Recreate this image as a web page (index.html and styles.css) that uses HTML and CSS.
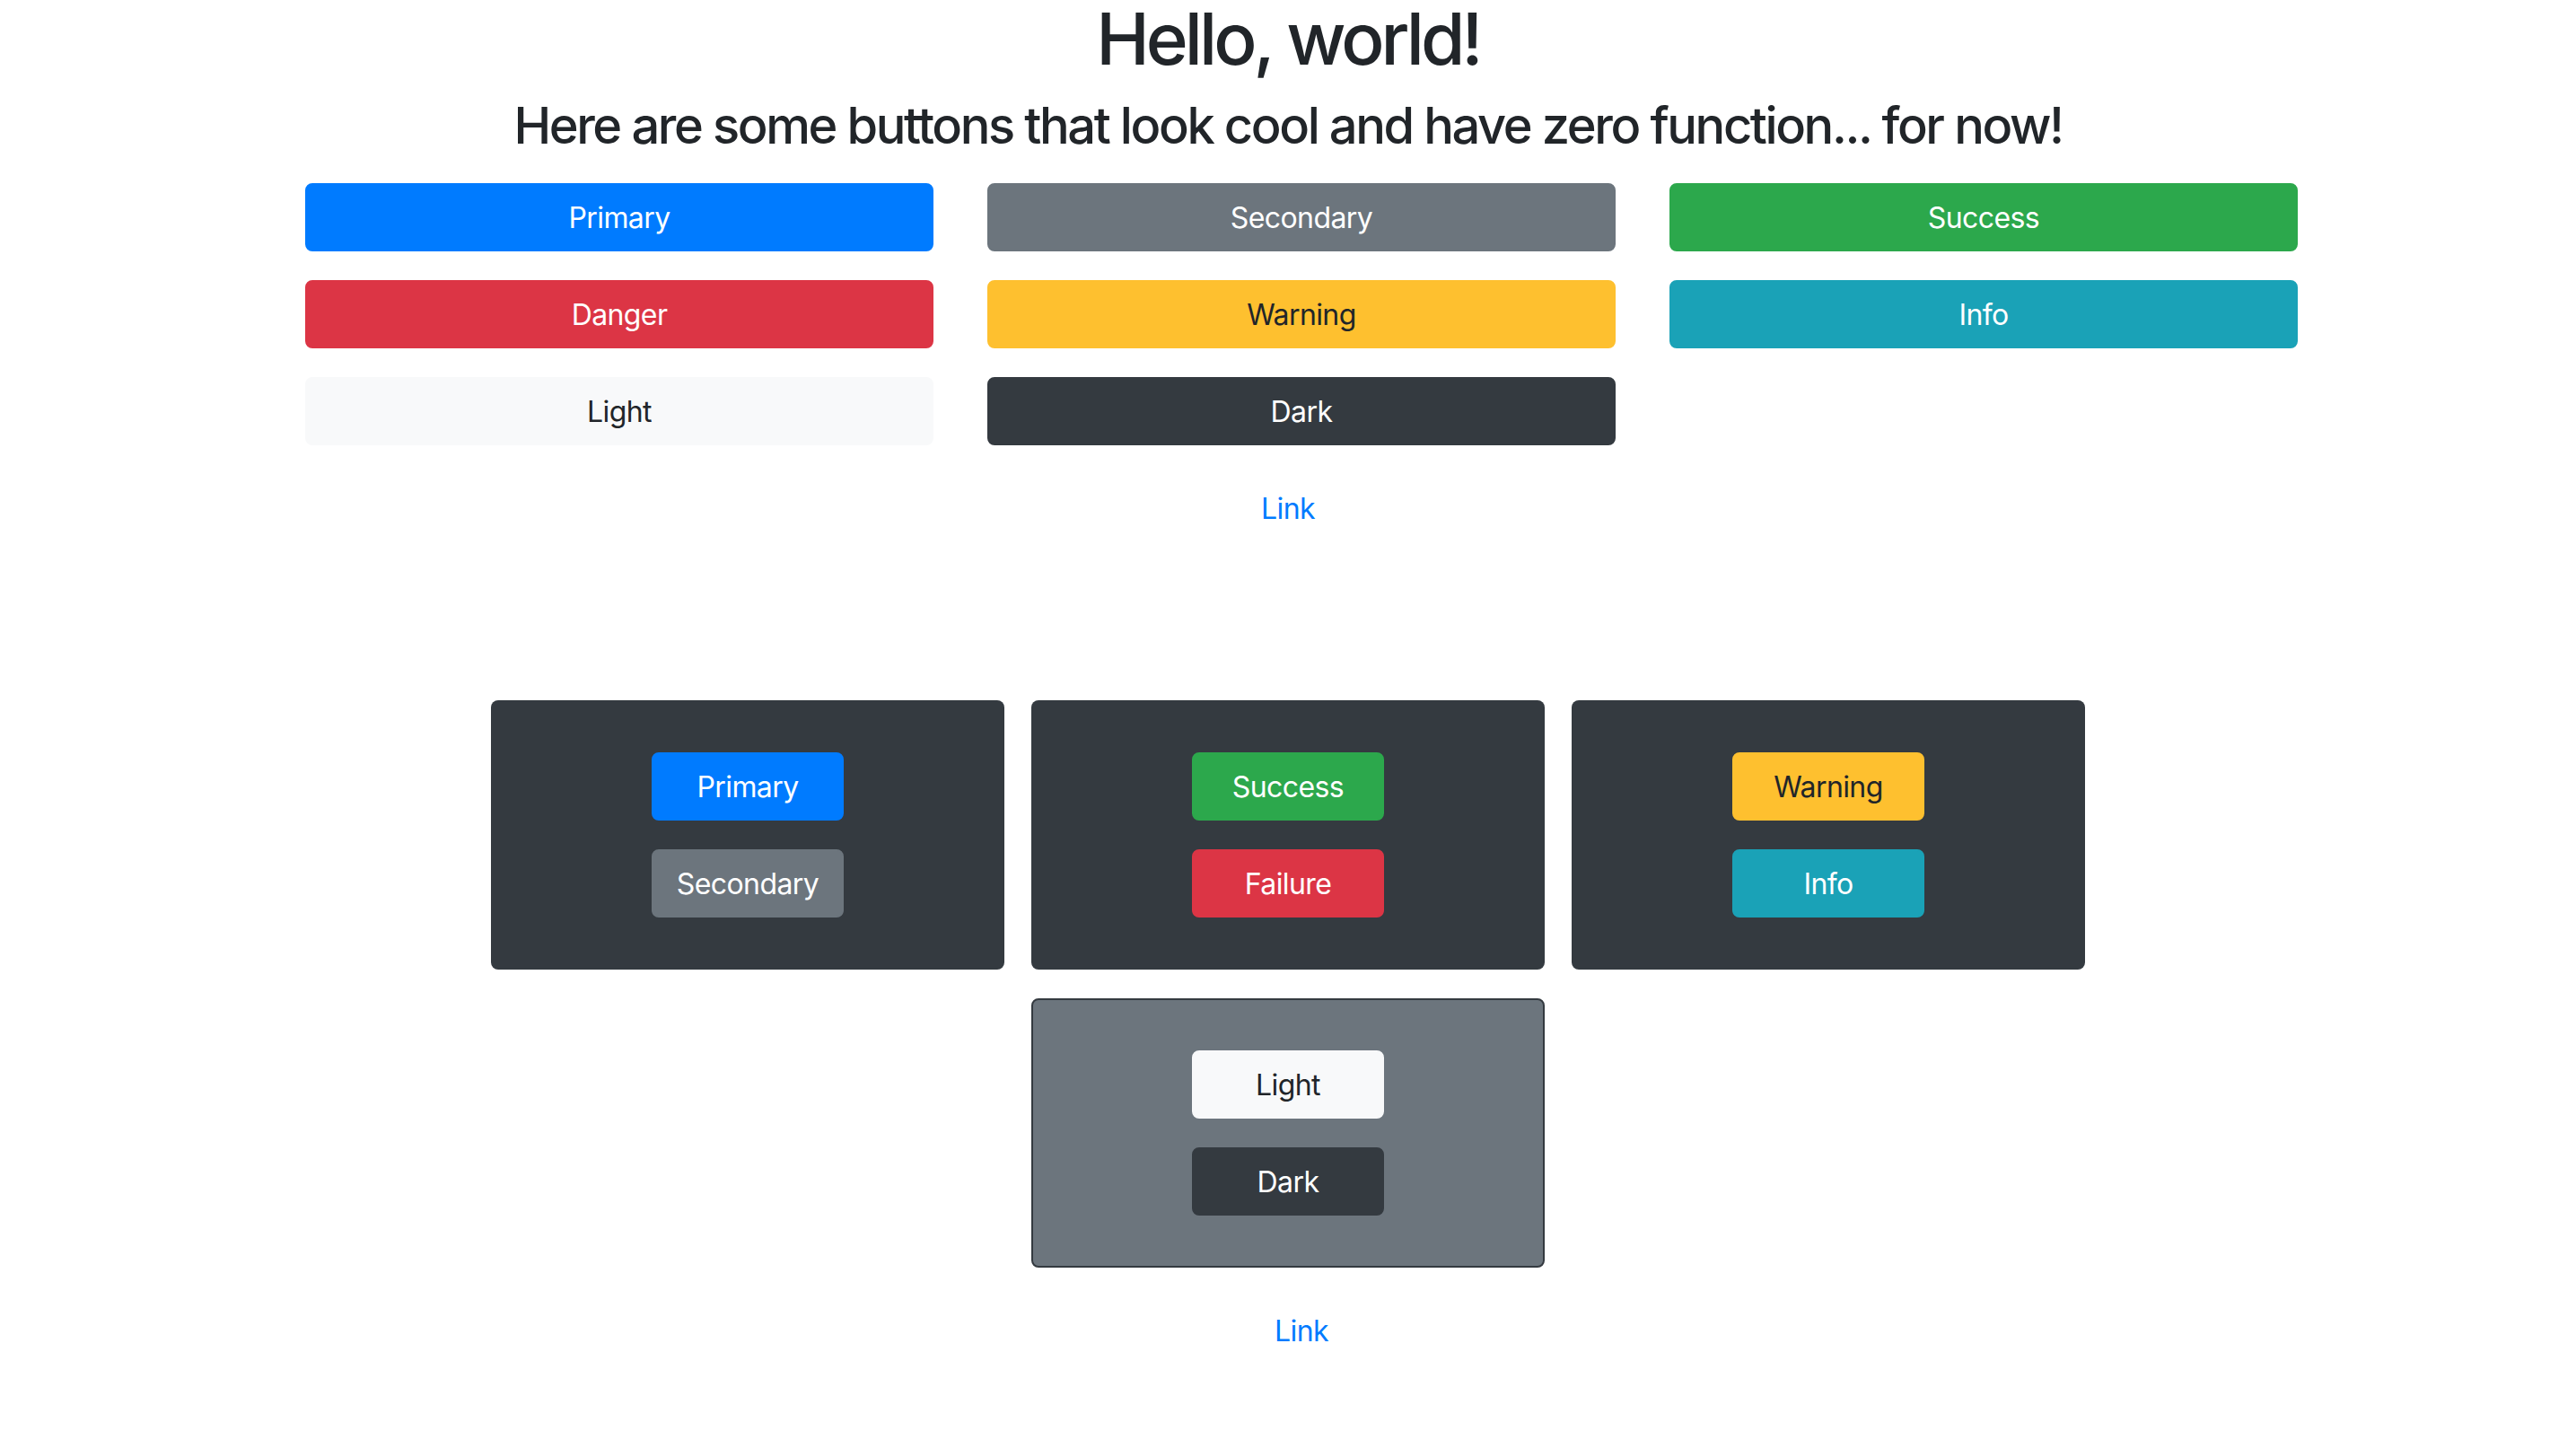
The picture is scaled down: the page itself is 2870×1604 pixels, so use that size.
FILE: index.html
```html
<!DOCTYPE html>
<html lang="en">
<head>
<meta charset="utf-8">
<title>Buttons</title>
<link rel="stylesheet" href="styles.css">
</head>
<body>
<main class="page">
  <h1 class="title">Hello, world!</h1>
  <h3 class="subtitle">Here are some buttons that look cool and have zero function... for now!</h3>

  <div class="grid-wrap">
    <div class="btn-grid">
      <button class="btn btn-primary">Primary</button>
      <button class="btn btn-secondary">Secondary</button>
      <button class="btn btn-success">Success</button>
      <button class="btn btn-danger">Danger</button>
      <button class="btn btn-warning">Warning</button>
      <button class="btn btn-info">Info</button>
      <button class="btn btn-light">Light</button>
      <button class="btn btn-dark">Dark</button>
    </div>
  </div>

  <div class="link-row">
    <button class="btn btn-link">Link</button>
  </div>

  <div class="panel-grid">
    <div class="panel">
      <button class="btn btn-small btn-primary">Primary</button>
      <button class="btn btn-small btn-secondary">Secondary</button>
    </div>
    <div class="panel">
      <button class="btn btn-small btn-success">Success</button>
      <button class="btn btn-small btn-danger">Failure</button>
    </div>
    <div class="panel">
      <button class="btn btn-small btn-warning">Warning</button>
      <button class="btn btn-small btn-info">Info</button>
    </div>
    <div class="panel panel-grey">
      <button class="btn btn-small btn-light">Light</button>
      <button class="btn btn-small btn-dark">Dark</button>
    </div>
  </div>

  <div class="link-row link-row-bottom">
    <button class="btn btn-link">Link</button>
  </div>
</main>
</body>
</html>
```

FILE: styles.css
```css
* {
  box-sizing: border-box;
}

html, body {
  margin: 0;
  padding: 0;
  background: #ffffff;
}

body {
  font-family: "Inter", "Liberation Sans", Arial, sans-serif;
  color: #212529;
  overflow: hidden;
}

.page {
  display: flex;
  flex-direction: column;
  align-items: center;
  text-align: center;
}

.title {
  margin: 0;
  font-size: 80px;
  line-height: 86px;
  font-weight: 500;
  letter-spacing: -4px;
}

.subtitle {
  margin: 21px 0 0;
  font-size: 56px;
  line-height: 67px;
  font-weight: 500;
  letter-spacing: -2.4px;
}

.grid-wrap {
  width: 2250px;
  padding-left: 30px;
  margin-top: 30px;
}

.btn-grid {
  display: grid;
  grid-template-columns: repeat(3, 700px);
  column-gap: 60px;
  row-gap: 32px;
}

.btn {
  display: inline-flex;
  align-items: center;
  justify-content: center;
  height: 76px;
  padding: 13px 24px 11px;
  border: 2px solid transparent;
  border-radius: 8px;
  font-family: "Inter", "Liberation Sans", Arial, sans-serif;
  font-size: 32px;
  line-height: 48px;
  font-weight: 400;
  letter-spacing: -0.6px;
  color: #ffffff;
  background: transparent;
  cursor: pointer;
}

.btn-primary { background: #007bff; border-color: #007bff; }
.btn-secondary { background: #6c757d; border-color: #6c757d; }
.btn-success { background: #2ca84c; border-color: #2ca84c; }
.btn-danger { background: #dc3545; border-color: #dc3545; }
.btn-warning { background: #fec02f; border-color: #fec02f; color: #212529; }
.btn-info { background: #1aa2b7; border-color: #1aa2b7; }
.btn-light { background: #f8f9fa; border-color: #f8f9fa; color: #212529; }
.btn-dark { background: #343a40; border-color: #343a40; }
.btn-link { color: #007bff; background: transparent; }

.link-row {
  margin-top: 32px;
  display: flex;
  justify-content: center;
}

.panel-grid {
  margin-top: 176px;
  display: grid;
  grid-template-columns: repeat(3, 572px);
  column-gap: 30px;
  row-gap: 32px;
}

.panel {
  height: 300px;
  background: #343a40;
  border-radius: 8px;
  display: flex;
  flex-direction: column;
  align-items: center;
  justify-content: center;
  gap: 32px;
}

.panel-grey {
  grid-column: 2;
  background: #6c757d;
  border: 2px solid #343a40;
}

.btn-small {
  width: 214px;
  padding-left: 0;
  padding-right: 0;
}

.link-row-bottom {
  padding-left: 30px;
}
```
